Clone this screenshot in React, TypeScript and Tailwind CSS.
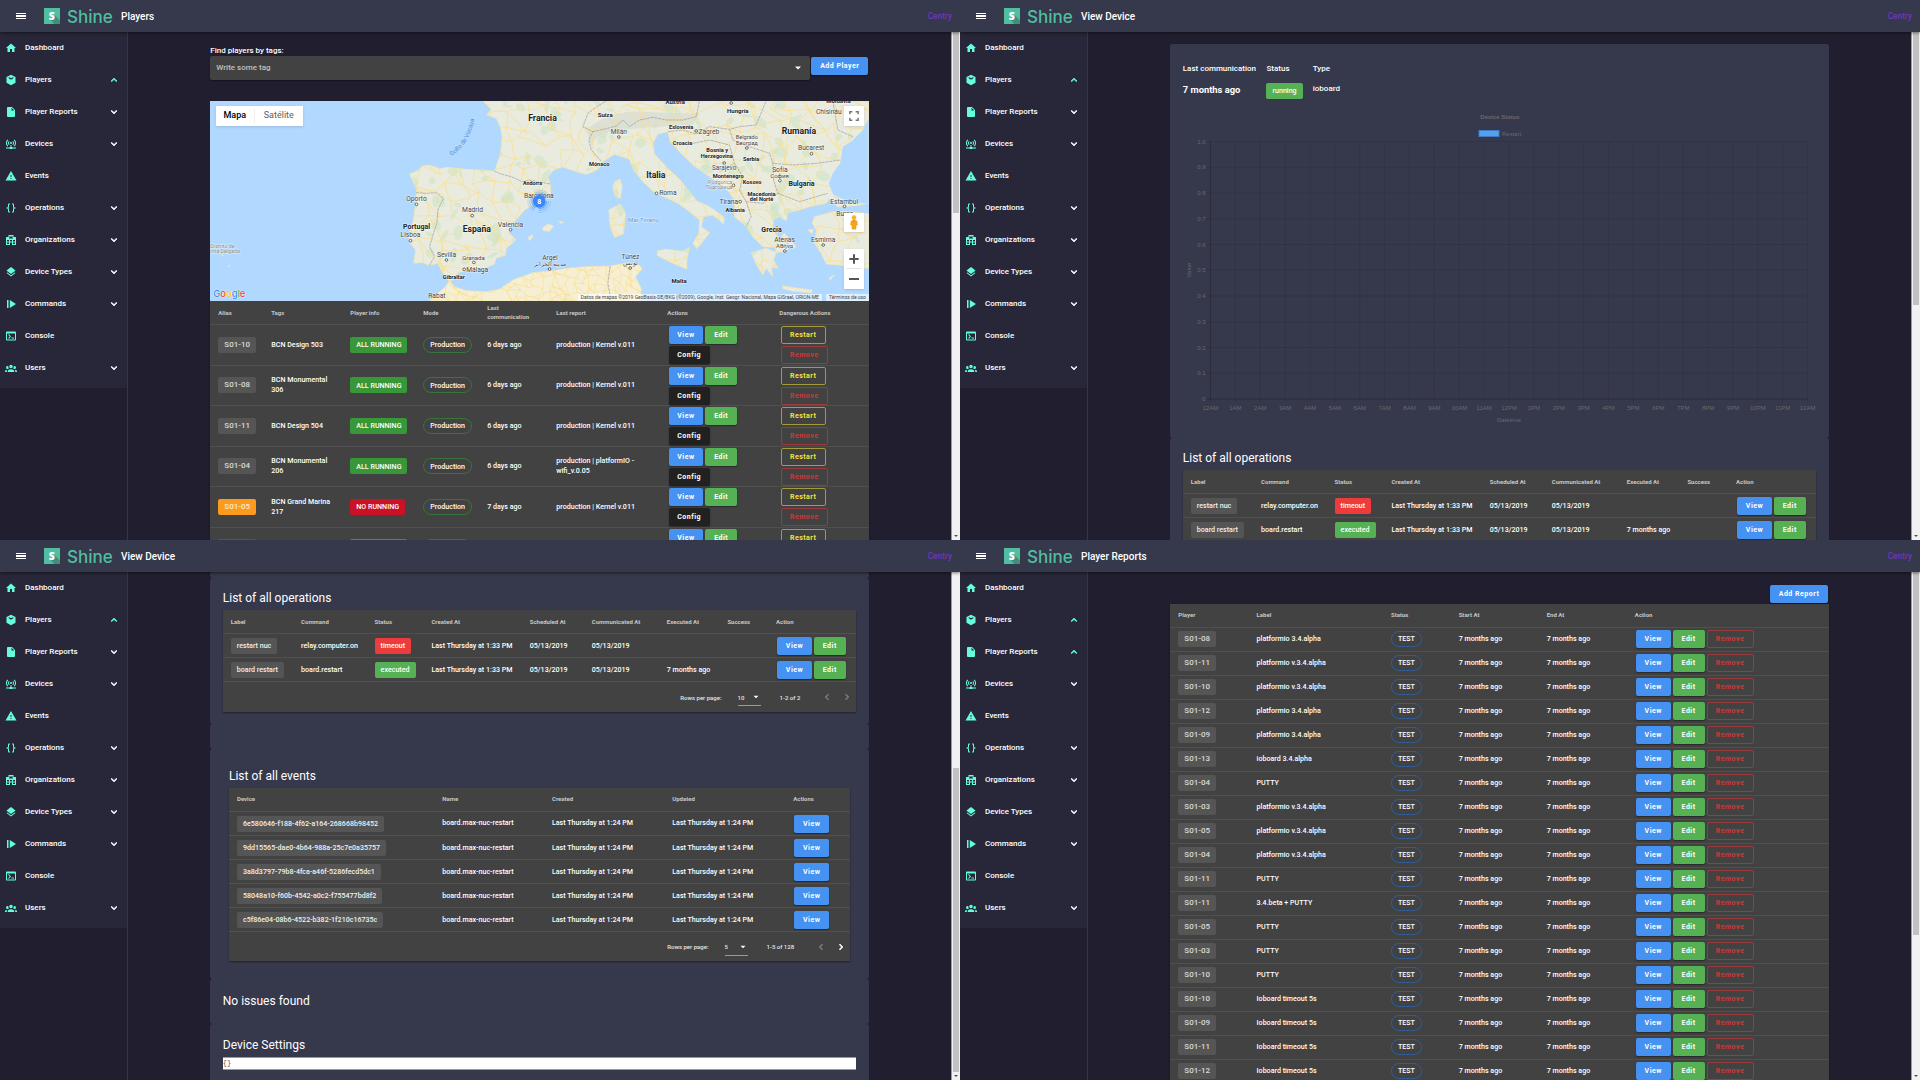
import React from 'react';

const ICONS = {
  home: 'M10,20V14H14V20H19V12H22L12,3L2,12H5V20H10Z',
  box: 'M12,1.5L21,6V17.5L12,22.5L3,17.5V6L12,1.5M7,6.2C7.6,9.4 9.4,10.8 12,10.8C14.6,10.8 16.4,9.4 17,6.2L14.8,7.2L12,8.4L9.2,7.2L7,6.2Z',
  file: 'M13,9V3.5L18.5,9M6,2C4.89,2 4,2.89 4,4V20A2,2 0 0,0 6,22H18A2,2 0 0,0 20,20V8L14,2H6Z',
  network:
    'M4.93,2.93C3.12,4.74 2,7.24 2,10C2,12.76 3.12,15.26 4.93,17.07L6.34,15.66C4.89,14.22 4,12.22 4,10C4,7.79 4.89,5.78 6.34,4.34L4.93,2.93M19.07,2.93L17.66,4.34C19.11,5.78 20,7.79 20,10C20,12.22 19.11,14.22 17.66,15.66L19.07,17.07C20.88,15.26 22,12.76 22,10C22,7.24 20.88,4.74 19.07,2.93M7.76,5.76C6.67,6.85 6,8.35 6,10C6,11.65 6.67,13.15 7.76,14.24L9.17,12.83C8.45,12.11 8,11.11 8,10C8,8.89 8.45,7.89 9.17,7.17L7.76,5.76M16.24,5.76L14.83,7.17C15.55,7.89 16,8.89 16,10C16,11.11 15.55,12.11 14.83,12.83L16.24,14.24C17.33,13.15 18,11.65 18,10C18,8.35 17.33,6.85 16.24,5.76M12,8A2,2 0 0,0 10,10A2,2 0 0,0 12,12A2,2 0 0,0 14,10A2,2 0 0,0 12,8M11,14V18H10A1,1 0 0,0 9,19H2V21H9A1,1 0 0,0 10,22H14A1,1 0 0,0 15,21H22V19H15A1,1 0 0,0 14,18H13V14H11Z',
  alert: 'M13,14H11V10H13M13,18H11V16H13M1,21H23L12,2L1,21Z',
  braces:
    'M8,3A2,2 0 0,0 6,5V9A2,2 0 0,1 4,11H3V13H4A2,2 0 0,1 6,15V19A2,2 0 0,0 8,21H10V19H8V14A2,2 0 0,0 6,12A2,2 0 0,0 8,10V5H10V3M16,3A2,2 0 0,1 18,5V9A2,2 0 0,0 20,11H21V13H20A2,2 0 0,0 18,15V19A2,2 0 0,1 16,21H14V19H16V14A2,2 0 0,1 18,12A2,2 0 0,1 16,10V5H14V3H16Z',
  building:
    'M2,22V7A1,1 0 0,1 3,6H7V2H17V6H21A1,1 0 0,1 22,7V22H14V17H10V22H2M9,4V10H11V8H13V10H15V4H13V6H11V4H9M4,20H8V17H4V20M4,15H8V12H4V15M16,20H20V17H16V20M16,15H20V12H16V15M10,15H14V12H10V15Z',
  layers:
    'M12,16L19.36,10.27L21,9L12,2L3,9L4.63,10.27M12,18.54L4.62,12.81L3,14.07L12,21.07L21,14.07L19.37,12.8L12,18.54Z',
  play: 'M4,4V20H7V4H4M9.5,4V20L22,12',
  console:
    'M20,19V7H4V19H20M20,3A2,2 0 0,1 22,5V19A2,2 0 0,1 20,21H4A2,2 0 0,1 2,19V5C2,3.89 2.9,3 4,3H20M13,17V15H18V17H13M9.58,13L5.57,9H8.4L11.7,12.3C12.09,12.69 12.09,13.33 11.7,13.72L8.42,17H5.59L9.58,13Z',
  group:
    'M12,5.5A3.5,3.5 0 0,1 15.5,9A3.5,3.5 0 0,1 12,12.5A3.5,3.5 0 0,1 8.5,9A3.5,3.5 0 0,1 12,5.5M5,8C5.56,8 6.08,8.15 6.53,8.42C6.38,9.85 6.8,11.27 7.66,12.38C7.16,13.34 6.16,14 5,14A3,3 0 0,1 2,11A3,3 0 0,1 5,8M19,8A3,3 0 0,1 22,11A3,3 0 0,1 19,14C17.84,14 16.84,13.34 16.34,12.38C17.2,11.27 17.62,9.85 17.47,8.42C17.92,8.15 18.44,8 19,8M5.5,18.25C5.5,16.18 8.41,14.5 12,14.5C15.59,14.5 18.5,16.18 18.5,18.25V20H5.5V18.25M0,20V18.5C0,17.11 1.89,15.94 4.45,15.6C3.86,16.28 3.5,17.22 3.5,18.25V20H0M24,20H20.5V18.25C20.5,17.22 20.14,16.28 19.55,15.6C22.11,15.94 24,17.11 24,18.5V20Z',
  down: 'M7.41,8.58L12,13.17L16.59,8.58L18,10L12,16L6,10L7.41,8.58Z',
  up: 'M7.41,15.41L12,10.83L16.59,15.41L18,14L12,8L6,14L7.41,15.41Z',
  left: 'M15.41,16.58L10.83,12L15.41,7.41L14,6L8,12L14,18L15.41,16.58Z',
  right: 'M8.59,16.58L13.17,12L8.59,7.41L10,6L16,12L10,18L8.59,16.58Z',
  caret: 'M6,9L12,15L18,9Z',
};

type IconName = keyof typeof ICONS;

function Icon({ name, className = 'size-3' }: { name: IconName; className?: string }) {
  return (
    <svg viewBox="0 0 24 24" className={`shrink-0 ${className}`} fill="currentColor" fillRule="evenodd">
      <path
        d={ICONS[name]}
        stroke="currentColor"
        strokeWidth={name === 'down' || name === 'up' || name === 'left' || name === 'right' ? 1.2 : 0}
      />
    </svg>
  );
}

/* ---------- shared chrome ---------- */

const NAV: { label: string; icon: IconName; expandable?: boolean }[] = [
  { label: 'Dashboard', icon: 'home' },
  { label: 'Players', icon: 'box', expandable: true },
  { label: 'Player Reports', icon: 'file', expandable: true },
  { label: 'Devices', icon: 'network', expandable: true },
  { label: 'Events', icon: 'alert' },
  { label: 'Operations', icon: 'braces', expandable: true },
  { label: 'Organizations', icon: 'building', expandable: true },
  { label: 'Device Types', icon: 'layers', expandable: true },
  { label: 'Commands', icon: 'play', expandable: true },
  { label: 'Console', icon: 'console' },
  { label: 'Users', icon: 'group', expandable: true },
];

function Header({ title }: { title: string }) {
  return (
    <header className="relative z-10 flex h-8 shrink-0 items-center bg-[#36384c] pr-2 shadow-[0_1px_3px_rgba(0,0,0,0.5)]">
      <div className="ml-4 flex w-[10px] flex-col gap-[1.5px]">
        <span className="h-[1.2px] bg-white" />
        <span className="h-[1.2px] bg-white" />
        <span className="h-[1.2px] bg-white" />
      </div>
      <svg viewBox="0 0 16 16" className="ml-[18px] size-4">
        <rect width="16" height="16" fill="#52bea1" />
        <path d="M11 7.5 16 12.500V16H10L7 12Z" fill="#3d8f7e" />
        <text x="7.9" y="11.6" textAnchor="middle" fontSize="10.5" fontWeight="800" fill="#fff" fontFamily="Open Sans, sans-serif">
          S
        </text>
      </svg>
      <span className="ml-[7px] w-[54px] pt-[1px] whitespace-nowrap font-[Inter,sans-serif] text-[17px] leading-8 font-medium text-[#52bea1]">
        Shine
      </span>
      <span className="pt-[1px] text-[10px] leading-8 font-medium text-white">{title}</span>
      <span className="ml-auto text-[8.3px] font-medium text-[#6a3ab8]">Centry</span>
    </header>
  );
}

function Sidebar({ open }: { open: string[] }) {
  return (
    <aside className="w-32 shrink-0 border-r border-[#35364a]">
      <nav className="h-[356px] bg-[#272739]">
        {NAV.map((item) => {
          const isOpen = open.includes(item.label);
          return (
            <div key={item.label} className="flex h-8 items-center pr-[7px] pl-[5px]">
              <Icon name={item.icon} className="size-3 text-[#64ffda]" />
              <span className="ml-2 text-[8px] font-medium text-white">{item.label}</span>
              {item.expandable && (
                <Icon
                  name={isOpen ? 'up' : 'down'}
                  className={`ml-auto size-3 ${isOpen ? 'text-[#64ffda]' : 'text-white'}`}
                />
              )}
            </div>
          );
        })}
      </nav>
    </aside>
  );
}

function Scrollbar({ start, size, arrow = true }: { start: string; size: string; arrow?: boolean }) {
  return (
    <div className="flex w-[9px] shrink-0 flex-col items-center border-l border-[#9a9a9f] bg-[#f1f1f1]">
      <div className={start} />
      <div className={`w-[6.5px] shrink-0 bg-[#c1c1c1] ${size}`} />
      {arrow && <Icon name="caret" className="mt-auto size-2 text-[#505050]" />}
    </div>
  );
}

function Pane({
  title,
  open,
  scrollbar,
  children,
}: {
  title: string;
  open: string[];
  scrollbar: React.ReactNode;
  children: React.ReactNode;
}) {
  return (
    <section className="flex h-[540px] w-[960px] flex-col overflow-hidden bg-[#211e2f]">
      <Header title={title} />
      <div className="flex min-h-0 flex-1">
        <Sidebar open={open} />
        <main className="min-w-0 flex-1 overflow-hidden pl-[82.3px]">
          <div className="w-[658.7px]">{children}</div>
        </main>
        {scrollbar}
      </div>
    </section>
  );
}

/* ---------- small controls ---------- */

const BTN = {
  View: 'w-[34.5px] bg-[#4592f3] text-white shadow-[0_1px_1.5px_rgba(0,0,0,0.4)]',
  Edit: 'w-8 bg-[#55b153] text-white shadow-[0_1px_1.5px_rgba(0,0,0,0.4)]',
  Config: 'w-[41px] bg-[#212121] text-white shadow-[0_1px_1.5px_rgba(0,0,0,0.4)]',
  Restart: 'w-[45px] border border-[#a39b3c] text-[#f4e23a]',
  Remove: 'w-[47px] border border-[#9c3b3b] text-[#c83a3a]',
  'Add Player': 'w-[56.5px] bg-[#4592f3] text-white shadow-[0_1px_1.5px_rgba(0,0,0,0.4)]',
  'Add Report': 'w-[58px] bg-[#4592f3] text-white shadow-[0_1px_1.5px_rgba(0,0,0,0.4)]',
};

function Btn({ kind }: { kind: keyof typeof BTN }) {
  return (
    <button
      className={`flex h-[18px] shrink-0 items-center justify-center rounded-[2px] text-[7px] font-bold tracking-[0.5px] whitespace-nowrap ${BTN[kind]}`}
    >
      {kind}
    </button>
  );
}

const CHIP = {
  grey: 'rounded-[2px] bg-[#555555] text-[#f0f0f0]',
  alias: 'rounded-[2px] bg-[#555555] text-[#dadada]',
  orange: 'rounded-[2px] bg-[#fb9a1c] text-[#fbe9cf]',
  green: 'rounded-[2px] bg-[#389738] text-white',
  lime: 'rounded-[2px] bg-[#55b153] text-white',
  red: 'rounded-[2px] bg-[#ee3b3b] text-white',
  crimson: 'rounded-[2px] bg-[#cb1125] text-white',
  production: 'rounded-full border border-[#38733b] text-white',
  test: 'rounded-full border border-[#2f5b96] text-white',
};

function Chip({
  tone,
  className = 'text-[7.1px] font-medium',
  children,
}: {
  tone: keyof typeof CHIP;
  className?: string;
  children: React.ReactNode;
}) {
  return (
    <span
      className={`inline-flex h-4 items-center justify-center px-[6px] leading-none whitespace-nowrap ${CHIP[tone]} ${className}`}
    >
      {children}
    </span>
  );
}

function Table({
  cols,
  heads,
  headHeight,
  rowHeight,
  rows,
  footer,
}: {
  cols: string;
  heads: string[];
  headHeight: string;
  rowHeight: string;
  rows: React.ReactNode[][];
  footer?: React.ReactNode;
}) {
  return (
    <div className="bg-[#424242] shadow-[0_1px_1.5px_rgba(0,0,0,0.4)]">
      <div className={`grid items-center border-b border-[#505050] pl-[8px] ${cols} ${headHeight}`}>
        {heads.map((h) => (
          <span
            key={h}
            className={`pb-[1px] text-[6px] leading-[9px] font-bold text-[#c6c6c6] ${h === 'Last communication' ? 'w-[50px]' : ''}`}
          >
            {h}
          </span>
        ))}
      </div>
      {rows.map((cells, i) => (
        <div
          key={i}
          className={`grid items-center border-b border-[#505050] pl-[8px] text-[7.1px] leading-[10.2px] font-medium text-white ${cols} ${rowHeight}`}
        >
          {cells.map((c, j) => (
            <div key={j}>{c}</div>
          ))}
        </div>
      ))}
      {footer}
    </div>
  );
}

/* ---------- map ---------- */

const MAINLAND =
  'M850,213 L875,238 L862,255 L890,265 L902,290 L908,320 L903,370 L890,410 L885,424 L850,420 L800,418 L745,412 L720,416 L690,405 L668,408 L655,422 L630,432 L640,455 L652,480 L648,520 L642,570 L626,620 L632,640 L648,660 L643,700 L668,698 L690,706 L715,700 L730,730 L748,752 L762,750 L775,728 L800,722 L832,724 L862,712 L885,702 L890,684 L918,676 L920,655 L950,630 L928,608 L934,588 L975,540 L1010,520 L1040,505 L1054,490 L1052,462 L1046,440 L1062,420 L1090,411 L1130,425 L1160,433 L1178,427 L1198,415 L1210,395 L1245,373 L1290,388 L1302,420 L1330,455 L1365,487 L1400,503 L1435,520 L1470,545 L1500,570 L1498,610 L1480,640 L1492,656 L1506,640 L1530,608 L1505,590 L1512,560 L1540,555 L1572,582 L1574,562 L1530,530 L1490,512 L1475,490 L1442,450 L1400,410 L1365,372 L1360,340 L1375,312 L1405,305 L1412,335 L1440,365 L1480,405 L1530,440 L1580,475 L1605,510 L1605,560 L1640,590 L1660,620 L1690,650 L1730,652 L1725,668 L1760,664 L1770,650 L1740,625 L1720,600 L1722,570 L1740,560 L1760,572 L1765,548 L1800,540 L1830,530 L1880,520 L1890,505 L1915,530 L1960,528 L2008,520 L2008,213 Z';
const ANATOLIA =
  'M1845,560 L1900,545 L1960,545 L2008,552 L2008,715 L1960,712 L1920,705 L1880,702 L1865,670 L1845,640 L1850,600 L1838,580 Z';
const AFRICA =
  'M690,813 L715,790 L738,770 L750,752 L765,770 L800,782 L860,785 L900,778 L940,750 L1000,728 L1060,722 L1110,714 L1160,710 L1230,708 L1290,698 L1318,705 L1328,716 L1308,740 L1325,775 L1322,813 Z';
const ISLANDS = [
  'M1245,455 L1262,448 L1268,470 L1262,505 L1248,500 L1240,475 Z',
  'M1228,540 L1262,522 L1278,550 L1272,612 L1245,622 L1232,590 Z',
  'M1375,662 L1400,658 L1450,664 L1470,652 L1462,690 L1462,718 L1410,695 L1372,676 Z',
  'M1655,668 L1700,655 L1730,668 L1722,690 L1735,715 L1715,712 L1720,740 L1700,715 L1690,735 L1672,705 Z',
  'M1028,595 L1045,582 L1062,588 L1050,604 L1032,602 Z',
  'M1078,574 L1092,576 L1086,582 Z',
  'M986,622 L998,614 L1000,622 L990,632 Z',
  'M1750,768 L1790,774 L1838,780 L1836,788 L1780,784 L1750,776 Z',
  'M1755,610 L1790,650 L1782,654 L1745,618 Z',
  'M1825,600 L1842,598 L1838,612 Z',
  'M1905,735 L1892,750 L1888,744 Z',
];
const BLACK_SEA =
  'M2008,265 L1990,300 L1955,335 L1930,350 L1922,400 L1900,430 L1888,460 L1900,492 L1940,512 L1975,518 L2008,522 Z';
const BORDERS =
  'M885,424 L905,432 L935,440 L968,455 L990,450 L1052,462 M650,488 L680,490 L710,488 L732,505 L715,540 L712,580 L702,610 L690,650 L705,680 L690,706 M1205,393 L1175,360 L1168,330 L1180,305 L1150,290 L1165,250 L1195,228 L1220,213 M1180,305 L1220,296 L1250,288 L1270,270 L1290,290 L1320,270 L1360,262 L1400,270 L1450,270 L1490,260 L1500,213 M1405,305 L1450,300 L1490,312 L1530,290 L1590,298 L1620,290 L1670,285 L1700,213 M1480,340 L1530,330 L1590,345 L1605,400 L1560,425 M1590,298 L1600,330 L1650,350 L1710,370 L1720,400 L1780,405 L1850,400 L1922,390 M1720,400 L1722,450 L1735,490 L1690,520 L1640,515 L1620,480 L1630,440 L1605,400 M1735,490 L1800,515 L1850,500 L1885,490 M1640,515 L1655,560 L1640,590 M1232,708 L1225,760 L1235,813 M1900,213 L1915,300 L1960,320';

/** Deterministic pseudo-random generator, so the road network is stable. */
function makeRandom(seed: number) {
  let s = seed;
  return () => {
    s = (s * 16807) % 2147483647;
    return s / 2147483647;
  };
}

function buildRoads(x0: number, y0: number, x1: number, y1: number, step: number, seed: number) {
  const rnd = makeRandom(seed);
  const nx = Math.ceil((x1 - x0) / step);
  const ny = Math.ceil((y1 - y0) / step);
  const pts: number[][][] = [];
  for (let i = 0; i <= nx; i++) {
    pts.push([]);
    for (let j = 0; j <= ny; j++) {
      pts[i].push([x0 + i * step + (rnd() - 0.5) * step * 1.2, y0 + j * step + (rnd() - 0.5) * step * 1.2]);
    }
  }
  const seg: string[] = [];
  const link = (a: number[], b: number[]) => {
    const mx = (a[0] + b[0]) / 2 + (rnd() - 0.5) * step * 0.5;
    const my = (a[1] + b[1]) / 2 + (rnd() - 0.5) * step * 0.5;
    seg.push(`M${a[0].toFixed(0)},${a[1].toFixed(0)}Q${mx.toFixed(0)},${my.toFixed(0)} ${b[0].toFixed(0)},${b[1].toFixed(0)}`);
  };
  for (let i = 0; i < nx; i++) {
    for (let j = 0; j < ny; j++) {
      if (rnd() < 0.75) link(pts[i][j], pts[i + 1][j]);
      if (rnd() < 0.75) link(pts[i][j], pts[i][j + 1]);
      if (rnd() < 0.35) link(pts[i][j], pts[i + 1][j + 1]);
    }
  }
  return seg.join('');
}

const ROADS = buildRoads(620, 200, 2020, 820, 44, 77);
const ROADS_AFRICA = buildRoads(690, 700, 1330, 820, 22, 31);

const rndGreen = makeRandom(421);
const GREENS = Array.from({ length: 170 }, () => ({
  x: 640 + rndGreen() * 1370,
  y: 213 + rndGreen() * 480,
  rx: 6 + rndGreen() * 18,
  ry: 4 + rndGreen() * 12,
  a: rndGreen() * 180,
}));

type Label = [text: string, x: number, y: number, size: number, weight?: number, color?: string, anchor?: 'start' | 'middle' | 'end'];
const LABELS: Label[] = [
  ['Francia', 1029, 272, 26, 700, '#222'],
  ['España', 832, 606, 26, 700, '#222'],
  ['Italia', 1369, 445, 26, 700, '#222'],
  ['Rumanía', 1798, 313, 26, 700, '#222'],
  ['Portugal', 651, 597, 21, 700, '#222'],
  ['Bulgaria', 1806, 469, 21, 700, '#222'],
  ['Grecia', 1716, 606, 21, 700, '#222'],
  ['Hungría', 1615, 250, 18, 700, '#222'],
  ['Suiza', 1217, 261, 18, 700, '#222'],
  ['Austria', 1427, 221, 18, 700, '#222'],
  ['Moldavia', 1917, 220, 18, 700, '#222'],
  ['Eslovenia', 1445, 298, 17, 700, '#222'],
  ['Croacia', 1449, 345, 17, 700, '#222'],
  ['Bosnia y', 1553, 367, 17, 700, '#222'],
  ['Herzegovina', 1552, 384, 17, 700, '#222'],
  ['Serbia', 1655, 393, 17, 700, '#222'],
  ['Montenegro', 1586, 444, 17, 700, '#222'],
  ['Kosovo', 1658, 462, 17, 700, '#222'],
  ['Macedonia', 1686, 499, 17, 700, '#222'],
  ['del Norte', 1686, 514, 17, 700, '#222'],
  ['Albania', 1607, 546, 17, 700, '#222'],
  ['Mónaco', 1199, 409, 17, 700, '#222'],
  ['Andorra', 999, 465, 16, 700, '#222'],
  ['Gibraltar', 763, 748, 17, 700, '#222'],
  ['Malta', 1439, 759, 18, 700, '#222'],
  ['Milán', 1258, 311, 20],
  ['Zagreb', 1497, 311, 20, 400, '#444', 'start'],
  ['Belgrado', 1642, 328, 17],
  ['Београд', 1642, 345, 17],
  ['Bucarest', 1835, 361, 20],
  ['Chisináu', 1888, 251, 20],
  ['Sarajevo', 1574, 420, 19],
  ['Podgorica', 1562, 462, 16, 400, '#888'],
  ['Подгорица', 1558, 477, 16, 400, '#888'],
  ['Sofía', 1741, 425, 20],
  ['София', 1740, 443, 18],
  ['Tirana', 1588, 522, 20],
  ['Estambul', 1934, 521, 20],
  ['Bursa', 1936, 557, 20],
  ['Esmirna', 1871, 635, 20],
  ['Atenas', 1755, 635, 20],
  ['Αθήνα', 1755, 654, 18],
  ['Roma', 1379, 496, 20, 400, '#444', 'start'],
  ['Barcelona', 1018, 503, 20],
  ['Madrid', 819, 547, 20],
  ['Valencia', 933, 590, 20],
  ['Oporto', 651, 514, 20],
  ['Lisboa', 633, 622, 20],
  ['Sevilla', 741, 680, 20],
  ['Granada', 822, 691, 18],
  ['Málaga', 800, 725, 20, 400, '#444', 'start'],
  ['Rabat', 712, 804, 20],
  ['Argel', 1051, 689, 20],
  ['مدينة الجزائر', 1051, 707, 17],
  ['Túnez', 1293, 686, 20],
  ['تونس', 1293, 704, 17],
  ['Distrito de', 69, 653, 16, 400, '#888'],
  ['Ponta Delgada', 69, 668, 16, 400, '#888'],
  ['Mar Tirreno', 1332, 577, 18, 400, '#5b8fd0'],
];
const DOTS = [
  [651, 523], [818, 557], [933, 599], [633, 632], [741, 690], [823, 697], [794, 718], [1050, 717], [1292, 714],
  [1258, 321], [1490, 303], [1642, 354], [1836, 371], [1574, 399], [1602, 466], [1741, 452], [1622, 515],
  [1935, 529], [1871, 645], [1756, 663], [1371, 490], [1595, 219],
];

function MapView() {
  return (
    <div className="relative h-[200px] overflow-hidden bg-[#b1d8ff]">
      <svg viewBox="31.5 213 1976 600" preserveAspectRatio="none" className="block size-full" fontFamily="Roboto, sans-serif">
        <defs>
          <clipPath id="land">
            <path d={MAINLAND} />
            <path d={ANATOLIA} />
            <path d={ISLANDS.slice(0, 4).join(' ')} />
          </clipPath>
          <clipPath id="africa">
            <path d={AFRICA} />
          </clipPath>
        </defs>
        <g fill="#e9ebdf" stroke="#f7e6a8" strokeWidth="2" strokeLinejoin="round">
          <path d={MAINLAND} />
          <path d={ANATOLIA} />
          <path d={AFRICA} fill="#f6efd4" />
          {ISLANDS.map((d) => (
            <path key={d} d={d} />
          ))}
          <circle cx="69" cy="675" r="2" />
          <circle cx="88" cy="708" r="2" />
        </g>
        <g clipPath="url(#land)">
          {GREENS.map((g, i) => (
            <ellipse
              key={i}
              cx={g.x}
              cy={g.y}
              rx={g.rx}
              ry={g.ry}
              fill="#c8e3bf"
              opacity="0.45"
              transform={`rotate(${g.a.toFixed(0)} ${g.x.toFixed(0)} ${g.y.toFixed(0)})`}
            />
          ))}
          <path d="M1160,300 Q1230,240 1330,245 T1500,250 L1480,285 Q1350,290 1260,300 T1180,360Z" fill="#d9ddd2" opacity="0.8" />
          <path d={ROADS} fill="none" stroke="#fbe08d" strokeWidth="2.4" />
          <path d={BLACK_SEA} fill="#b1d8ff" />
        </g>
        <g clipPath="url(#africa)">
          <path d={ROADS_AFRICA} fill="none" stroke="#fadf8b" strokeWidth="1.800" />
        </g>
        <path d={BORDERS} fill="none" stroke="#9a9a9a" strokeWidth="2" strokeDasharray="9 2" />
        {DOTS.map(([x, y]) => (
          <circle key={`${x}-${y}`} cx={x} cy={y} r="4" fill="#fff" stroke="#444" strokeWidth="2.4" />
        ))}
        {LABELS.map(([t, x, y, size, weight = 400, color = '#444', anchor = 'middle']) => (
          <text
            key={t}
            x={x}
            y={y}
            fontSize={size}
            fontWeight={weight}
            fill={color}
            textAnchor={anchor}
            stroke="#fff"
            strokeOpacity="0.6"
            strokeWidth="3"
            paintOrder="stroke"
          >
            {t}
          </text>
        ))}
        <path id="vizcaya" d="M756,378 Q812,340 823,270" fill="none" />
        <text fontSize="18" fill="#5b8fd0">
          <textPath href="#vizcaya">Golfo de Vizcaya</textPath>
        </text>
        <g fill="none" stroke="#3d86f5">
          <circle cx="1019" cy="514" r="22" strokeWidth="4" opacity="0.6" strokeDasharray="36 10" />
          <circle cx="1019" cy="514" r="28" strokeWidth="3" opacity="0.4" strokeDasharray="46 12" />
          <circle cx="1019" cy="514" r="34" strokeWidth="3" opacity="0.2" strokeDasharray="56 15" />
        </g>
        <circle cx="1019" cy="514" r="19" fill="#3a86f7" />
        <text x="1019" y="521.500" fontSize="21" fontWeight="700" fill="#fff" textAnchor="middle">
          8
        </text>
      </svg>

      <div className="absolute top-[5px] left-[5.5px] flex h-5 items-center bg-white text-[9px] shadow-sm">
        <span className="w-[39px] border-r border-[#eee] text-center font-medium text-black">Mapa</span>
        <span className="w-12 text-center text-[#606060]">Satélite</span>
      </div>
      <div className="absolute top-[5px] right-[5px] flex size-5 items-center justify-center bg-white shadow-sm">
        <svg viewBox="0 0 18 18" className="size-[10px]" fill="none" stroke="#777" strokeWidth="2.600">
          <path d="M1.500 6V1.500H6M12 1.500h4.500V6M16.500 12v4.500H12M6 16.500H1.500V12" />
        </svg>
      </div>
      <div className="absolute top-[112px] right-[5px] flex h-[19px] w-5 items-center justify-center bg-white shadow-sm">
        <svg viewBox="0 0 12 18" className="h-[15px] w-[10px]">
          <circle cx="6" cy="3.200" r="2.800" fill="#f6b52d" />
          <path d="M2.300 6.500h7.400l1 5.500H9.200l-.7 5.500h-5L2.800 12H1.300Z" fill="#f2a51f" />
          <path d="M4 6.300h4L6 8Z" fill="#d4731b" />
        </svg>
      </div>
      <div className="absolute top-[148px] right-[5px] flex h-10 w-5 flex-col items-center bg-white shadow-sm">
        <div className="flex h-5 w-4 items-center justify-center border-b border-[#e6e6e6]">
          <svg viewBox="0 0 10 10" className="size-[10px]" stroke="#555" strokeWidth="2">
            <path d="M5 .3v9.400M.3 5h9.400" />
          </svg>
        </div>
        <div className="flex h-5 items-center">
          <span className="h-[2px] w-[10px] bg-[#555]" />
        </div>
      </div>
      <div className="absolute bottom-[1px] left-[3px] flex font-[Inter,sans-serif] text-[9.400px] leading-[12px] font-medium [text-shadow:0_0_1px_#fff,0_0_1px_#fff]">
        <span className="text-[#4285f4]">G</span>
        <span className="text-[#ea4335]">o</span>
        <span className="text-[#fbbc05]">o</span>
        <span className="text-[#4285f4]">g</span>
        <span className="text-[#34a853]">l</span>
        <span className="text-[#ea4335]">e</span>
      </div>
      <div className="absolute right-0 bottom-0 flex h-[7px] items-center text-[5px] leading-none whitespace-nowrap text-[#444]">
        <span className="bg-white/60 px-[3px] py-[1px]">
          Datos de mapas ©2019 GeoBasis-DE/BKG (©2009), Google, Inst. Geogr. Nacional, Mapa GISrael, ORION-ME
        </span>
        <span className="ml-1 bg-white/60 px-[3px] py-[1px]">Términos de uso</span>
      </div>
    </div>
  );
}

/* ---------- players ---------- */

const PLAYERS = [
  { alias: 'S01-10', tags: 'BCN Design 503', ok: true, last: '6 days ago', report: 'production | Kernel v.011' },
  { alias: 'S01-08', tags: 'BCN Monumental 306', ok: true, last: '6 days ago', report: 'production | Kernel v.011' },
  { alias: 'S01-11', tags: 'BCN Design 504', ok: true, last: '6 days ago', report: 'production | Kernel v.011' },
  { alias: 'S01-04', tags: 'BCN Monumental 206', ok: true, last: '6 days ago', report: 'production | platformIO - wifi_v.0.05' },
  { alias: 'S01-05', tags: 'BCN Grand Marina 217', ok: false, last: '7 days ago', report: 'production | Kernel v.011' },
  { alias: 'S01-12', tags: 'BCN Design 505', ok: true, last: '7 days ago', report: 'production | Kernel v.011' },
];

function PlayersPane() {
  return (
    <Pane title="Players" open={['Players']} scrollbar={<Scrollbar start="h-0" size="h-[180.5px]" />}>
      <div className="h-6 pt-[12.6px] text-[8px] leading-3 font-medium text-white">Find players by tags:</div>
      <div className="flex items-start">
        <div className="flex h-6 w-[599.7px] items-center rounded-[2px] bg-[#424242] pr-[6px] pl-[6px] text-[8px] font-medium text-[#c0c0c0] shadow-[0_1px_1.5px_rgba(0,0,0,0.4)]">
          Write some tag
          <Icon name="caret" className="ml-auto size-[12px] text-white" />
        </div>
        <div className="mt-[1px] ml-[1.5px]">
          <Btn kind="Add Player" />
        </div>
      </div>
      <div className="mt-[21px]">
        <MapView />
        <Table
          cols="grid-cols-[53px_79px_73px_64px_69px_111px_112px_80px]"
          headHeight="h-[24px]"
          rowHeight="h-[40.5px]"
          heads={['Alias', 'Tags', 'Player info', 'Mode', 'Last communication', 'Last report', 'Actions', 'Dangerous Actions']}
          rows={PLAYERS.map((p) => [
            <Chip tone={p.ok ? 'alias' : 'orange'} className="text-[8px]">{p.alias}</Chip>,
            <div className="w-[64px]">{p.tags}</div>,
            <Chip tone={p.ok ? 'green' : 'crimson'}>{p.ok ? 'ALL RUNNING' : 'NO RUNNING'}</Chip>,
            <Chip tone="production">Production</Chip>,
            p.last,
            <div className="w-[90px]">{p.report}</div>,
            <div className="flex w-[76px] flex-wrap gap-x-[2px] gap-y-[2px] pt-[1px] pl-[1.4px]">
              <Btn kind="View" />
              <Btn kind="Edit" />
              <Btn kind="Config" />
            </div>,
            <div className="flex flex-col items-start gap-[2px] pt-[1px] pl-[1.4px]">
              <Btn kind="Restart" />
              <Btn kind="Remove" />
            </div>,
          ])}
        />
      </div>
    </Pane>
  );
}

/* ---------- device ---------- */

const HOURS = [
  '12AM', '1AM', '2AM', '3AM', '4AM', '5AM', '6AM', '7AM', '8AM', '9AM', '10AM', '11AM', '12PM',
  '1PM', '2PM', '3PM', '4PM', '5PM', '6PM', '7PM', '8PM', '9PM', '10PM', '11PM', '12AM',
];

function StatusChart() {
  return (
    <svg viewBox="0 0 634 320" className="block h-[320px] w-[634px]" fontFamily="Liberation Sans, sans-serif" fontSize="6" fill="#68686d">
      <text x="317" y="11" textAnchor="middle" fontWeight="700">Device Status</text>
      <rect x="296" y="22.5" width="20" height="6" fill="#54a0ea" stroke="#3d7cc4" />
      <text x="319" y="28">Restart</text>
      {HOURS.map((h, i) => (
        <g key={i}>
          <line x1={27.5 + i * 24.88} x2={27.5 + i * 24.88} y1="33.5" y2="294" stroke="#000" strokeOpacity={i ? 0.08 : 0.2} />
          <text x={27.5 + i * 24.88} y="301.5" textAnchor="middle">{h}</text>
        </g>
      ))}
      {Array.from({ length: 11 }, (_, i) => (
        <g key={i}>
          <line x1="23" x2="624.5" y1={33.5 + i * 25.75} y2={33.5 + i * 25.75} stroke="#000" strokeOpacity={i === 10 ? 0.2 : 0.08} />
          <text x="22.5" y={35.5 + i * 25.75} textAnchor="end">{i === 0 ? '1.0' : i === 10 ? '0' : `0.${10 - i}`}</text>
        </g>
      ))}
      <text x="326" y="313.5" textAnchor="middle">Datetime</text>
      <text transform="translate(8 162) rotate(-90)" textAnchor="middle">Value</text>
    </svg>
  );
}

function Pagination({ size, range, last, className }: { size: string; range: string; last: boolean; className: string }) {
  return (
    <div className={`flex items-center justify-end text-[6px] font-medium text-[#e6e6e6] ${className}`}>
      <span>Rows per page:</span>
      <span className="mt-[4px] ml-4 flex h-[14px] items-center gap-[6px] border-b border-[#9a9a9a] pb-[3px]">
        <span className="min-w-[7px]">{size}</span>
        <Icon name="caret" className="size-[10px] text-white" />
      </span>
      <span className="ml-[19px]">{range}</span>
      <Icon name="left" className="ml-[20.7px] size-3 text-[#7b7b7b]" />
      <Icon name="right" className={`ml-2 size-3 ${last ? 'text-[#7b7b7b]' : 'text-white'}`} />
    </div>
  );
}

function Operations() {
  const actions = (
    <div className="flex gap-[2px] pt-[0.5px] pl-[1.2px]">
      <Btn kind="View" />
      <Btn kind="Edit" />
    </div>
  );
  return (
    <div className="h-[146.8px] rounded-[2px] bg-[#36384c] px-[12.5px] pt-[12px] shadow-[0_1px_1px_rgba(0,0,0,0.25)]">
      <h2 className="h-[20.8px] text-[12px] leading-[17.4px] text-white">List of all operations</h2>
      <Table
        cols="grid-cols-[70.3px_73.5px_56.8px_98.4px_62px_75px_60.6px_48.7px_80px]"
        headHeight="h-6"
        rowHeight="h-[24.1px]"
        heads={['Label', 'Command', 'Status', 'Created At', 'Scheduled At', 'Communicated At', 'Executed At', 'Success', 'Action']}
        rows={[
          [<Chip tone="grey">restart nuc</Chip>, 'relay.computer.on', <Chip tone="red">timeout</Chip>, 'Last Thursday at 1:33 PM', '05/13/2019', '05/13/2019', '', '', actions],
          [<Chip tone="grey">board restart</Chip>, 'board.restart', <Chip tone="lime">executed</Chip>, 'Last Thursday at 1:33 PM', '05/13/2019', '05/13/2019', '7 months ago', '', actions],
        ]}
        footer={<Pagination size="10" range="1-2 of 2" last className="h-[29.5px] pr-[3.5px]" />}
      />
    </div>
  );
}

function DevicePane() {
  return (
    <Pane title="View Device" open={['Players']} scrollbar={<Scrollbar start="h-0" size="h-[273px]" />}>
      <div className="mt-3 h-[393.5px] rounded-[2px] bg-[#36384c] px-[12.5px] pt-[18.6px] shadow-[0_1px_1px_rgba(0,0,0,0.25)]">
        <div className="flex h-[45px] text-[8px] leading-3 font-medium text-white">
          <div className="w-[83.7px]">
            <div>Last communication</div>
            <div className="mt-[9px] text-[9.4px] font-bold">7 months ago</div>
          </div>
          <div className="w-[46.3px]">
            <div>Status</div>
            <div className="mt-2 flex">
              <Chip tone="lime">running</Chip>
            </div>
          </div>
          <div>
            <div>Type</div>
            <div className="mt-2">ioboard</div>
          </div>
        </div>
        <StatusChart />
      </div>
      <Operations />
    </Pane>
  );
}

const EVENTS = [
  '6e580646-f188-4f62-a164-268668b98452',
  '9dd15565-dae0-4b64-988a-25c7e0a35757',
  '3a8d3797-79b8-4fca-a46f-5286fecd5dc1',
  '58048a10-f60b-4542-a0c2-f755477bd8f2',
  'c5f86e04-08b6-4522-b382-1f210c16735c',
];

function DeviceScrolledPane() {
  const card = 'rounded-[2px] bg-[#36384c] shadow-[0_1px_1px_rgba(0,0,0,0.25)]';
  return (
    <Pane title="View Device" open={['Players']} scrollbar={<Scrollbar start="h-[195.5px] shrink-0" size="h-[304px]" />}>
      <div className={`h-[5.5px] ${card}`} />
      <Operations />
      <div className={`h-[25px] ${card}`} />
      <div className={`h-[230.2px] px-[18.7px] pt-[17.5px] ${card}`}>
        <h2 className="h-[21.2px] text-[12px] leading-[18px] text-white">List of all events</h2>
        <Table
          cols="grid-cols-[205.3px_109.7px_120.3px_121px_50px]"
          headHeight="h-6"
          rowHeight="h-[24.1px]"
          heads={['Device', 'Name', 'Created', 'Updated', 'Actions']}
          rows={EVENTS.map((e) => [
            <Chip tone="grey">{e}</Chip>,
            'board.max-nuc-restart',
            'Last Thursday at 1:24 PM',
            'Last Thursday at 1:24 PM',
            <div className="pt-[0.5px] pl-[1.2px]">
              <Btn kind="View" />
            </div>,
          ])}
          footer={<Pagination size="5" range="1-5 of 128" last={false} className="h-[28.5px] pr-[3.5px]" />}
        />
      </div>
      <div className={`h-[44.8px] px-[12.5px] pt-[12.5px] text-[12px] leading-[18px] text-white ${card}`}>No issues found</div>
      <div className={`h-[60px] px-[12.5px] pt-3 ${card}`}>
        <h2 className="h-[20.7px] text-[12px] leading-[18px] text-white">Device Settings</h2>
        <div className="flex h-[13px] items-center border-y border-[#9a9a9a] bg-white font-['Liberation_Mono',monospace] text-[7px] text-[#555]">
          {'{}'}
        </div>
      </div>
    </Pane>
  );
}

/* ---------- reports ---------- */

const REPORTS: [string, string][] = [
  ['S01-08', 'platformio 3.4.alpha'],
  ['S01-11', 'platformio v.3.4.alpha'],
  ['S01-10', 'platformio v.3.4.alpha'],
  ['S01-12', 'platformio 3.4.alpha'],
  ['S01-09', 'platformio 3.4.alpha'],
  ['S01-13', 'ioboard 3.4.alpha'],
  ['S01-04', 'PUTTY'],
  ['S01-03', 'platformio v.3.4.alpha'],
  ['S01-05', 'platformio v.3.4.alpha'],
  ['S01-04', 'platformio v.3.4.alpha'],
  ['S01-11', 'PUTTY'],
  ['S01-11', '3.4.beta + PUTTY'],
  ['S01-05', 'PUTTY'],
  ['S01-03', 'PUTTY'],
  ['S01-10', 'PUTTY'],
  ['S01-10', 'Ioboard timeout 5s'],
  ['S01-09', 'Ioboard timeout 5s'],
  ['S01-11', 'Ioboard timeout 5s'],
  ['S01-12', 'Ioboard timeout 5s'],
];

function ReportsPane() {
  return (
    <Pane title="Player Reports" open={['Players', 'Player Reports']} scrollbar={<Scrollbar start="h-0" size="h-[363px]" />}>
      <div className="flex h-8 justify-end pt-[13px] pr-[1px]">
        <Btn kind="Add Report" />
      </div>
      <Table
        cols="grid-cols-[78.3px_134.4px_67.7px_88px_88.2px_120px]"
        headHeight="h-[23.5px]"
        rowHeight="h-6"
        heads={['Player', 'Label', 'Status', 'Start At', 'End At', 'Action']}
        rows={REPORTS.map(([alias, label]) => [
          <Chip tone="alias" className="text-[8px]">{alias}</Chip>,
          label,
          <Chip tone="test">TEST</Chip>,
          '7 months ago',
          '7 months ago',
          <div className="flex gap-[2px] pl-[1.2px]">
            <Btn kind="View" />
            <Btn kind="Edit" />
            <Btn kind="Remove" />
          </div>,
        ])}
      />
    </Pane>
  );
}

export default function App() {
  return (
    <div className="grid h-[1080px] w-[1920px] grid-cols-2 grid-rows-2 overflow-hidden font-[Roboto,sans-serif]">
      <PlayersPane />
      <DevicePane />
      <DeviceScrolledPane />
      <ReportsPane />
    </div>
  );
}
